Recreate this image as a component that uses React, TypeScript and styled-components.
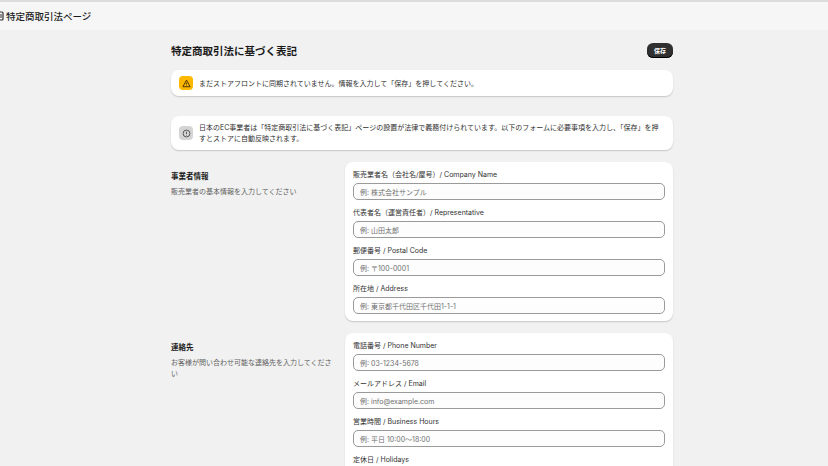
import React from "react";
import styled, { createGlobalStyle } from "styled-components";

const G = createGlobalStyle`
  html,body{margin:0;padding:0;background:#f1f1f1;}
  body{font-family:"Inter","Noto Sans CJK JP",sans-serif;color:#303030;}
`;
const Top = styled.div`
  height:30px;background:#f6f6f6;border-top:2px solid #dcdcdc;display:flex;align-items:center;
  gap:2px;font-size:9.5px;font-weight:500;color:#1a1a1a;box-sizing:border-box;
`;
const Main = styled.div`width:502px;margin-left:calc(50% - 243px);padding-top:12px;display:flex;flex-direction:column;`;
const Head = styled.div`display:flex;justify-content:space-between;align-items:center;height:16px;margin-bottom:12px;`;
const Title = styled.h1`margin:0;font-size:10.5px;font-weight:600;color:#1a1a1a;`;
const Btn = styled.button`
  background:#303030;color:#fff;border:none;border-radius:6px;font-size:6px;font-weight:700;
  height:15px;padding:0 7px;font-family:inherit;box-shadow:inset 0 -1px 0 #000;
`;
const Banner = styled.div<{ $mb: number }>`
  background:#fff;border-radius:8px;box-shadow:0 1px 1.5px rgba(0,0,0,.18);
  display:flex;align-items:center;gap:6px;padding:6px 8px;margin-bottom:${p => p.$mb}px;
  font-size:7px;line-height:11px;color:#303030;
`;
const IconBox = styled.div<{ $bg: string }>`
  width:14px;height:14px;border-radius:4px;background:${p => p.$bg};flex:none;
  display:flex;align-items:center;justify-content:center;
`;
const Section = styled.div`display:flex;gap:10px;margin-bottom:12px;`;
const Side = styled.div`width:164px;flex:none;padding-top:8px;`;
const SideT = styled.div`font-size:7.5px;font-weight:600;color:#1a1a1a;margin-bottom:5px;`;
const SideD = styled.div`font-size:7px;color:#616161;line-height:11px;`;
const Card = styled.div`
  flex:1;background:#fff;border-radius:8px;box-shadow:0 1px 1.5px rgba(0,0,0,.18);
  padding:8px 8px 7px;display:flex;flex-direction:column;gap:8px;
`;
const Field = styled.div`display:flex;flex-direction:column;gap:3px;`;
const Label = styled.div`font-size:7px;line-height:10px;color:#303030;`;
const Input = styled.div`
  height:17px;box-sizing:border-box;border:1px solid #9a9a9a;border-radius:5px;background:#fdfdfd;
  font-size:7px;color:#707070;display:flex;align-items:center;padding:0 6px;
`;

const sections = [
  { t: "事業者情報", d: "販売業者の基本情報を入力してください", f: [
    ["販売業者名（会社名/屋号）/ Company Name", "例: 株式会社サンプル"],
    ["代表者名（運営責任者）/ Representative", "例: 山田太郎"],
    ["郵便番号 / Postal Code", "例: 〒100-0001"],
    ["所在地 / Address", "例: 東京都千代田区千代田1-1-1"],
  ]},
  { t: "連絡先", d: "お客様が問い合わせ可能な連絡先を入力してください", f: [
    ["電話番号 / Phone Number", "例: 03-1234-5678"],
    ["メールアドレス / Email", "例: info@example.com"],
    ["営業時間 / Business Hours", "例: 平日 10:00〜18:00"],
    ["定休日 / Holidays", "例: 土日祝"],
  ]},
];

export default function App() {
  return (
    <>
      <G />
      <Top>
        <svg width="4" height="10" viewBox="0 0 4 10">
          <rect x="-3" y="1" width="6" height="8" rx="1" fill="none" stroke="#303030" strokeWidth="1.2" />
          <line x1="0" y1="4" x2="2" y2="4" stroke="#303030" />
          <line x1="0" y1="6" x2="2" y2="6" stroke="#303030" />
        </svg>
        特定商取引法ページ
      </Top>
      <Main>
        <Head><Title>特定商取引法に基づく表記</Title><Btn>保存</Btn></Head>
        <Banner $mb={20}>
          <IconBox $bg="#ffb800">
            <svg width="9" height="9" viewBox="0 0 10 10"><path d="M5 1.2 9 8.6H1z" fill="none" stroke="#4f3500" strokeWidth="1.1" strokeLinejoin="round" /><line x1="5" y1="4" x2="5" y2="6.2" stroke="#4f3500" strokeWidth="1" /><circle cx="5" cy="7.4" r=".5" fill="#4f3500" /></svg>
          </IconBox>
          まだストアフロントに同期されていません。情報を入力して「保存」を押してください。
        </Banner>
        <Banner $mb={12}>
          <IconBox $bg="#d4d4d4">
            <svg width="9" height="9" viewBox="0 0 10 10"><circle cx="5" cy="5" r="3.8" fill="none" stroke="#4a4a4a" strokeWidth="1" /><line x1="5" y1="3" x2="5" y2="5.6" stroke="#4a4a4a" strokeWidth="1" /><circle cx="5" cy="6.9" r=".5" fill="#4a4a4a" /></svg>
          </IconBox>
          <span>日本のEC事業者は「特定商取引法に基づく表記」ページの設置が法律で義務付けられています。以下のフォームに必要事項を入力し、「保存」を押すとストアに自動反映されます。</span>
        </Banner>
        {sections.map(s => (
          <Section key={s.t}>
            <Side><SideT>{s.t}</SideT><SideD>{s.d}</SideD></Side>
            <Card>
              {s.f.map(([l, p]) => (
                <Field key={l}><Label>{l}</Label><Input>{p}</Input></Field>
              ))}
            </Card>
          </Section>
        ))}
      </Main>
    </>
  );
}
